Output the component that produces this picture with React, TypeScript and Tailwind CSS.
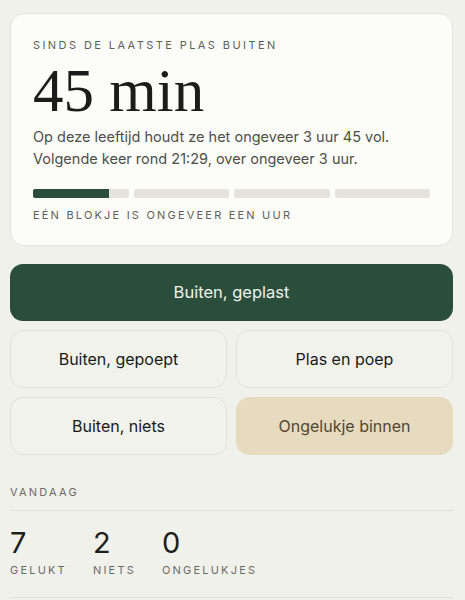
const sans = "font-['Inter','Liberation_Sans',sans-serif]";

function HourBlocks({ minutes }: { minutes: number }) {
  const blocks = [0, 1, 2, 3];
  return (
    <div className="flex gap-[5px]">
      {blocks.map((i) => {
        const fill = Math.max(0, Math.min(1, minutes / 60 - i));
        return (
          <div key={i} className="h-[9px] flex-1 overflow-hidden rounded-[2px] bg-[#e4e4dd]">
            <div className="h-full bg-[#2b4d3c]" style={{ width: `${fill * 100}%` }} />
          </div>
        );
      })}
    </div>
  );
}

function ActionButton({ label, tone = "plain" }: { label: string; tone?: "plain" | "accident" }) {
  const toneClass =
    tone === "accident"
      ? "bg-[#e6dbbf] border-[#e6dbbf] text-[#54462f]"
      : "bg-[#f2f2ed] border-[#e2e1da] text-[#181916]";
  return (
    <button className={`h-[58px] rounded-[13px] border text-[16px] ${toneClass}`}>{label}</button>
  );
}

function Stat({ value, label }: { value: number; label: string }) {
  return (
    <div className="flex flex-col">
      <span className="text-[29px] leading-[34px] text-[#1e1f1c]">{value}</span>
      <span className="mt-[3px] text-[11px] leading-[14px] tracking-[0.2em] text-[#6b6b66]">{label}</span>
    </div>
  );
}

export default function App() {
  return (
    <div className={`min-h-screen bg-[#f1f1ec] pl-[10px] pr-[12px] pt-[13px] ${sans}`}>
      <section className="rounded-[14px] border border-[#e3e2db] bg-[#fcfcf9] px-[22px] pt-[24px] pb-[23px]">
        <p className="text-[11px] leading-[14px] tracking-[0.22em] text-[#5f605b]">SINDS DE LAATSTE PLAS BUITEN</p>
        <h1 className="mt-[7px] font-['Liberation_Serif',serif] text-[61px] leading-[64px] text-[#1c1d1a]">45 min</h1>
        <p className="mt-[3px] text-[14.5px] leading-[22px] text-[#4e4f4a]">
          Op deze leeftijd houdt ze het ongeveer 3 uur 45 vol.
          <br />
          Volgende keer rond 21:29, over ongeveer 3 uur.
        </p>
        <div className="mt-[19px]">
          <HourBlocks minutes={48} />
        </div>
        <p className="mt-[10px] text-[11px] leading-[14px] tracking-[0.2em] text-[#5f605b]">EÉN BLOKJE IS ONGEVEER EEN UUR</p>
      </section>

      <div className="mt-[18px] flex flex-col gap-[9px]">
        <button className="h-[57px] rounded-[13px] bg-[#2b4d3c] text-[16.5px] text-[#f0f2ec]">Buiten, geplast</button>
        <div className="grid grid-cols-2 gap-[9px]">
          <ActionButton label="Buiten, gepoept" />
          <ActionButton label="Plas en poep" />
          <ActionButton label="Buiten, niets" />
          <ActionButton label="Ongelukje binnen" tone="accident" />
        </div>
      </div>

      <section className="mt-[30px]">
        <p className="text-[11px] leading-[14px] tracking-[0.2em] text-[#6b6b66]">VANDAAG</p>
        <div className="mt-[11px] border-t border-[#dfdfd8]" />
        <div className="mt-[15px] flex gap-[26px]">
          <Stat value={7} label="GELUKT" />
          <Stat value={2} label="NIETS" />
          <Stat value={0} label="ONGELUKJES" />
        </div>
        <div className="mt-[20px] border-t border-[#dfdfd8]" />
      </section>
    </div>
  );
}
